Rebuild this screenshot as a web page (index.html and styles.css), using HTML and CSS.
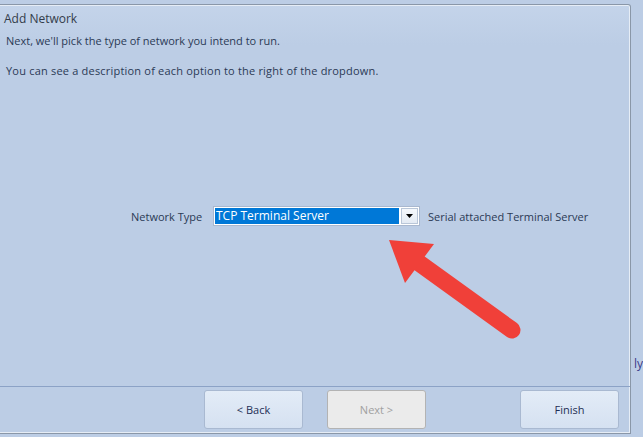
FILE: index.html
```html
<!DOCTYPE html>
<html>
<head>
<meta charset="utf-8">
<link rel="stylesheet" href="styles.css">
</head>
<body>
<div class="screen">
  <div class="panel">
    <div class="title">Add Network</div>
    <p class="line first">Next, we'll pick the type of network you intend to run.</p>
    <p class="line second">You can see a description of each option to the right of the dropdown.</p>
    <div class="middle">
      <div class="row">
        <span class="label">Network Type</span>
        <div class="combo">
          <span class="combo-text">TCP Terminal Server</span>
          <span class="combo-btn"><svg width="7" height="4" viewBox="0 0 7 4"><path d="M0 0H7L3.5 4Z" fill="#000"/></svg></span>
        </div>
        <span class="desc">Serial attached Terminal Server</span>
      </div>
    </div>
    <div class="footer">
      <button class="btn back">&lt; Back</button>
      <button class="btn next" disabled>Next &gt;</button>
      <button class="btn finish">Finish</button>
    </div>
  </div>
  <div class="side"><span>ly</span></div>
  <svg class="arrow" width="643" height="437" viewBox="0 0 643 437">
    <line x1="512" y1="330" x2="415" y2="260" stroke="#f04039" stroke-width="17" stroke-linecap="round"/>
    <polygon points="389,240 434,244 405,283" fill="#f04039"/>
  </svg>
</div>
</body>
</html>
```

FILE: styles.css
```css
html, body {
  margin: 0;
  padding: 0;
}
body {
  background: #bccde5;
  font-family: "Open Sans", "Noto Sans", sans-serif;
  font-size: 11px;
  color: #2b3a55;
}
.screen {
  position: relative;
  width: 643px;
  height: 437px;
  display: flex;
  overflow: hidden;
}
.panel {
  width: 633px;
  height: 428px;
  margin-top: 4px;
  border-top: 1px solid #8a97a8;
  border-right: 1px solid #8a97a8;
  border-bottom: 1px solid #8a97a8;
  border-top-right-radius: 3px;
  box-shadow: inset 0 1px 0 #e6edf6, inset -1px 0 0 #e6edf6, inset 0 -1px 0 #e6edf6;
  background: linear-gradient(#c4d4ea, #bccde5 40px);
  display: flex;
  flex-direction: column;
}
.title {
  font-size: 12px;
  padding: 6px 0 0 4px;
  height: 16px;
  line-height: 16px;
  color: #333c4a;
}
.line {
  margin: 0;
  padding-left: 6px;
  line-height: 16px;
}
.first {
  margin-top: 6px;
}
.second {
  margin-top: 14px;
  letter-spacing: 0.2px;
}
.middle {
  flex: 1;
  position: relative;
}
.row {
  display: flex;
  align-items: center;
  margin-top: 127px;
  padding-left: 131px;
}
.label {
  width: 82px;
}
.combo {
  width: 203px;
  height: 16px;
  border: 1px solid #a9b8cf;
  background: #fff;
  padding: 1px;
  display: flex;
  align-items: center;
}
.combo-text {
  flex: 1;
  height: 16px;
  line-height: 16px;
  background: #0078d7;
  color: #fff;
  padding-left: 1px;
  font-family: "Open Sans", sans-serif;
  font-size: 12px;
}
.combo-btn {
  width: 15px;
  height: 14px;
  margin-left: 2px;
  border: 1px solid #b9c6d8;
  background: linear-gradient(#f5f8fc, #e4ebf4);
  display: flex;
  align-items: center;
  justify-content: center;
}
.desc {
  margin-left: 8px;
}
.footer {
  height: 46px;
  border-top: 1px solid #8ca2c6;
  display: flex;
  align-items: flex-start;
  padding-top: 3px;
  padding-left: 204px;
  box-sizing: border-box;
  margin-bottom: 1px;
}
.btn {
  width: 99px;
  height: 39px;
  border: 1px solid #a9b9d1;
  border-radius: 3px;
  background: linear-gradient(#e3ecf7, #d5e1f1);
  font-family: "Open Sans", "Noto Sans", sans-serif;
  font-size: 11px;
  color: #1e2f55;
  padding: 0;
}
.next {
  margin-left: 24px;
  background: #ebebeb;
  border-color: #b3b3b3;
  color: #a0a0a0;
}
.finish {
  margin-left: 94px;
}
.side {
  flex: 1;
  padding-top: 355px;
  padding-left: 3px;
  color: #3a3c8a;
  font-size: 12px;
}
.arrow {
  position: absolute;
  left: 0;
  top: 0;
  pointer-events: none;
}
```
